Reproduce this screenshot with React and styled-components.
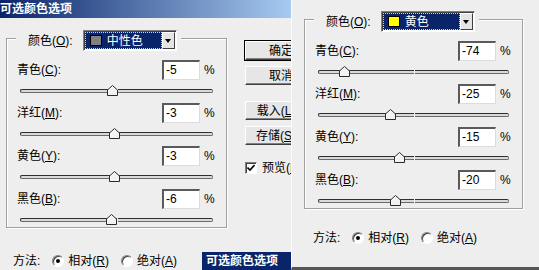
import React from 'react';
import styled, { createGlobalStyle } from 'styled-components';

const GlobalStyle = createGlobalStyle`
  html, body { margin: 0; padding: 0; }
  body {
    background: #5a5a5a;
    font-family: "Liberation Sans", "Noto Sans CJK SC", sans-serif;
    font-size: 12px;
    line-height: 14px;
    color: #000;
  }
`;

const CHANNELS = [
  { name: '青色', key: 'C' },
  { name: '洋红', key: 'M' },
  { name: '黄色', key: 'Y' },
  { name: '黑色', key: 'B' },
];

const Screen = styled.div`
  display: flex;
  width: 539px;
  height: 270px;
  overflow: hidden;
`;

const Window = styled.div`
  flex: 0 0 ${p => p.$width}px;
  height: 270px;
  box-sizing: border-box;
  display: flex;
  flex-direction: column;
  overflow: hidden;
  background: #eeeeee;
`;

const OverlayWindow = styled(Window)`
  border-left: 1px solid #fbfbfb;
  border-bottom: 3px solid #555;
`;

const TitleBar = styled.div`
  flex: 0 0 18px;
  height: 18px;
  background: linear-gradient(90deg, #0a246a 0%, #a6caf0 100%);
  color: #fff;
  font-weight: bold;
  line-height: 18px;
  white-space: nowrap;
`;

const Main = styled.div`
  display: flex;
  align-items: flex-start;
  padding-top: ${p => p.$top}px;
`;

const Group = styled.fieldset`
  flex: 0 0 auto;
  box-sizing: border-box;
  width: ${p => p.$width}px;
  margin: 0 0 0 ${p => p.$left}px;
  padding: 9px 0 0;
  min-inline-size: 0;
  border: 1px solid #a0a0a0;
  box-shadow: inset 1px 1px #fff, 1px 1px #fff;
`;

const Legend = styled.legend`
  display: flex;
  align-items: center;
  margin-left: 9px;
  padding: 4px 4px 0 12px;
  background: #eeeeee;
`;

const Key = styled.span`
  text-decoration: underline;
  text-underline-offset: 1px;
`;

const Caption = styled.span`
  white-space: nowrap;
`;

const ColorLabel = styled(Caption)`
  margin-right: 10px;
`;

const Select = styled.div`
  display: flex;
  box-sizing: border-box;
  width: 94px;
  height: 21px;
  padding: 1px;
  border: 1px solid;
  border-color: #808080 #fff #fff #808080;
  box-shadow: inset 1px 1px #404040;
  background: #fff;
`;

const Selected = styled.div`
  flex: 1;
  display: flex;
  align-items: center;
  gap: 5px;
  box-sizing: border-box;
  padding-left: 4px;
  background: #0a246a;
  border: 1px dotted #e8d890;
  color: #fff;
  white-space: nowrap;
`;

const Swatch = styled.span`
  width: 12px;
  height: 11px;
  box-sizing: border-box;
  border: 1px solid #000;
  background: ${p => p.$color};
`;

const ArrowButton = styled.div`
  flex: 0 0 13px;
  display: flex;
  align-items: center;
  justify-content: center;
  box-sizing: border-box;
  background: #e4e4e4;
  border: 1px solid;
  border-color: #fff #404040 #404040 #fff;

  &::after {
    content: '';
    border-left: 3px solid transparent;
    border-right: 3px solid transparent;
    border-top: 4px solid #000;
  }
`;

const Rows = styled.div`
  display: flex;
  flex-direction: column;
  gap: 5px;
`;

const FieldLine = styled.div`
  display: flex;
  align-items: center;
  height: 20px;
  padding: 0 12px 0 10px;
`;

const FieldLabel = styled.span`
  flex: 1;
  white-space: nowrap;
`;

const NumberBox = styled.div`
  width: 38px;
  height: 20px;
  box-sizing: border-box;
  padding-left: 2px;
  background: #fff;
  border-style: solid;
  border-width: 2px 1px 1px 2px;
  border-color: #5a5a5a #dcdcdc #dcdcdc #5a5a5a;
  line-height: 16px;
`;

const Percent = styled.span`
  width: 10px;
  margin-left: 4px;
`;

const SliderLine = styled.div`
  height: 18px;
  box-sizing: border-box;
  padding: 9px 13px 0;
`;

const Track = styled.div`
  position: relative;
  height: 4px;
  box-sizing: border-box;
  border: 1px solid;
  border-color: #2e2e2e #6a6a6a #6a6a6a #2e2e2e;
  border-radius: 2px;
  background: #dadada;

  &::before {
    content: '';
    position: absolute;
    left: 50%;
    top: -1px;
    width: 1px;
    height: 4px;
    background: #f4f4f4;
  }
`;

const Thumb = styled.svg`
  position: absolute;
  top: -5px;
  width: 11px;
  height: 11px;
`;

const ButtonColumn = styled.div`
  flex: 0 0 auto;
  display: flex;
  flex-direction: column;
  align-items: flex-start;
  margin-left: 18px;
  padding-top: 15px;
`;

const PushButton = styled.button`
  width: 72px;
  height: 19px;
  box-sizing: border-box;
  margin: ${p => p.$gap}px 0 0;
  padding: 0;
  display: flex;
  align-items: center;
  justify-content: center;
  font: inherit;
  color: #000;
  white-space: nowrap;
  background: #e6e6e6;
  border: 1px solid;
  border-color: #fff #404040 #404040 #fff;
  box-shadow: inset -1px -1px #808080;
  outline: ${p => (p.$primary ? '1px solid #000' : 'none')};
`;

const CheckRow = styled.label`
  display: flex;
  align-items: center;
  gap: 5px;
  margin-top: 16px;
  white-space: nowrap;
`;

const CheckBox = styled.span`
  width: 12px;
  height: 12px;
  box-sizing: border-box;
  display: flex;
  align-items: center;
  justify-content: center;
  background: #fff;
  border: 1px solid;
  border-color: #808080 #fff #fff #808080;
  box-shadow: inset 1px 1px #404040;
`;

const MethodRow = styled.div`
  flex: 0 0 18px;
  display: flex;
  align-items: center;
  height: 18px;
  margin-top: ${p => p.$top}px;
  padding-left: ${p => p.$left}px;
  white-space: nowrap;
`;

const RadioOption = styled.label`
  display: flex;
  align-items: center;
  gap: 4px;
  margin-left: 12px;
`;

const RadioDot = styled.span`
  width: 12px;
  height: 12px;
  box-sizing: border-box;
  display: flex;
  align-items: center;
  justify-content: center;
  border-radius: 50%;
  border: 1px solid;
  border-color: #808080 #fff #fff #808080;
  box-shadow: inset 1px 1px #404040;
  background: #fff;

  &::after {
    content: '';
    width: 4px;
    height: 4px;
    border-radius: 50%;
    background: ${p => (p.$checked ? '#000' : 'transparent')};
  }
`;

const TitleTag = styled.div`
  margin-left: auto;
  width: 89px;
  height: 18px;
  box-sizing: border-box;
  padding-left: 4px;
  background: #0a246a;
  color: #fff;
  font-weight: bold;
  line-height: 18px;
`;

const Mnemonic = ({ text, k, tail = ':' }) => (
  <Caption>
    {text}(<Key>{k}</Key>){tail}
  </Caption>
);

const SliderThumb = ({ value }) => (
  <Thumb viewBox="0 0 11 11" style={{ left: `calc(${(value + 100) / 2}% - 5px)` }}>
    <polygon points="0.5,10.5 0.5,5 5.5,0.5 10.5,5 10.5,10.5" fill="#f2f2f2" stroke="#2a2a2a" />
    <polyline points="1.5,9.5 1.5,5.4 5.5,1.8" fill="none" stroke="#fff" />
  </Thumb>
);

const ChannelRow = ({ channel, value }) => (
  <div>
    <FieldLine>
      <FieldLabel>
        <Mnemonic text={channel.name} k={channel.key} />
      </FieldLabel>
      <NumberBox>{value}</NumberBox>
      <Percent>%</Percent>
    </FieldLine>
    <SliderLine>
      <Track>
        <SliderThumb value={value} />
      </Track>
    </SliderLine>
  </div>
);

const ColorGroup = ({ color, values, width, left }) => (
  <Group $width={width} $left={left}>
    <Legend>
      <ColorLabel>
        <Mnemonic text="颜色" k="O" />
      </ColorLabel>
      <Select>
        <Selected>
          <Swatch $color={color.swatch} />
          {color.name}
        </Selected>
        <ArrowButton />
      </Select>
    </Legend>
    <Rows>
      {CHANNELS.map((c, i) => (
        <ChannelRow key={c.key} channel={c} value={values[i]} />
      ))}
    </Rows>
  </Group>
);

const Method = () => (
  <>
    <Caption>方法:</Caption>
    <RadioOption>
      <RadioDot $checked />
      <Mnemonic text="相对" k="R" tail="" />
    </RadioOption>
    <RadioOption>
      <RadioDot />
      <Mnemonic text="绝对" k="A" tail="" />
    </RadioOption>
  </>
);

export default function App() {
  return (
    <Screen>
      <GlobalStyle />
      <Window $width={291}>
        <TitleBar>可选颜色选项</TitleBar>
        <Main $top={8}>
          <ColorGroup
            color={{ name: '中性色', swatch: '#808080' }}
            values={[-5, -3, -3, -6]}
            width={221}
            left={6}
          />
          <ButtonColumn>
            <PushButton $primary $gap={0}>确定</PushButton>
            <PushButton $gap={6}>取消</PushButton>
            <PushButton $gap={16}>
              <Mnemonic text="载入" k="L" tail="..." />
            </PushButton>
            <PushButton $gap={6}>
              <Mnemonic text="存储" k="S" tail="..." />
            </PushButton>
            <CheckRow>
              <CheckBox>
                <svg width="8" height="8" viewBox="0 0 8 8">
                  <polyline points="0.5,3.5 3,6 7.5,1" fill="none" stroke="#000" strokeWidth="1.6" />
                </svg>
              </CheckBox>
              <Mnemonic text="预览" k="P" tail="" />
            </CheckRow>
          </ButtonColumn>
        </Main>
        <MethodRow $top={24} $left={13}>
          <Method />
          <TitleTag>可选颜色选项</TitleTag>
        </MethodRow>
      </Window>
      <OverlayWindow $width={248}>
        <Main $top={7}>
          <ColorGroup
            color={{ name: '黄色', swatch: '#ffff00' }}
            values={[-74, -25, -15, -20]}
            width={219}
            left={12}
          />
        </Main>
        <MethodRow $top={20} $left={21}>
          <Method />
        </MethodRow>
      </OverlayWindow>
    </Screen>
  );
}
